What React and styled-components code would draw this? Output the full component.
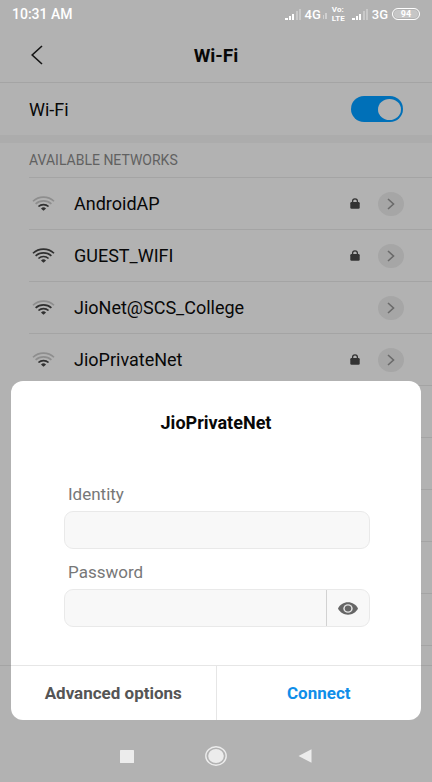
import React, { useState } from 'react';
import styled, { createGlobalStyle } from 'styled-components';

const NETWORKS = [
  { name: 'AndroidAP', level: 2, locked: true },
  { name: 'GUEST_WIFI', level: 4, locked: true },
  { name: 'JioNet@SCS_College', level: 3, locked: false },
  { name: 'JioPrivateNet', level: 2, locked: true },
];

const PENDING = [1, 2, 3, 4, 5];

function SignalBars() {
  return (
    <svg width="17" height="11" viewBox="0 0 17 11" fill="#fff" aria-hidden="true">
      <rect x="0" y="9" width="3" height="2" />
      <rect x="4" y="7" width="2" height="4" />
      <rect x="7" y="5" width="2" height="6" />
      <rect x="11" y="2" width="2" height="9" opacity="0.3" />
      <rect x="14" y="0" width="2" height="11" opacity="0.3" />
    </svg>
  );
}

function WifiIcon({ level }) {
  const tone = (n) => (level >= n ? '#303030' : '#8e8e8e');
  return (
    <svg width="23" height="15" viewBox="0 0 24 16" fill="none" strokeWidth="1.8" aria-hidden="true">
      <path d="M0.8 5.6C7 -0.2 17 -0.2 23.2 5.6" stroke={tone(4)} />
      <path d="M3.6 8.4C8.3 4.1 15.7 4.1 20.4 8.4" stroke={tone(3)} />
      <path d="M6.6 11.2C9.6 8.4 14.4 8.4 17.4 11.2" stroke={tone(2)} />
      <path d="M9.3 13.2Q12 11 14.7 13.2L12 15.6Z" fill={tone(1)} />
    </svg>
  );
}

function NetworkRow({ name, level, locked }) {
  return (
    <Row>
      <WifiIcon level={level} />
      <NetworkName>{name}</NetworkName>
      {locked && (
        <svg width="10" height="11" viewBox="0 0 10 11" aria-hidden="true">
          <path d="M2.6 5V3.2a2.4 2.4 0 0 1 4.8 0V5" fill="none" stroke="#333" strokeWidth="1.3" />
          <rect x="0.3" y="4" width="9.4" height="6.8" rx="1.2" fill="#333" />
        </svg>
      )}
      <DetailButton type="button" aria-label={`${name} details`}>
        <svg width="8" height="12" viewBox="0 0 8 12" fill="none" stroke="#6a6a6a" strokeWidth="1.6" aria-hidden="true">
          <path d="M1 1l5.5 5L1 11" />
        </svg>
      </DetailButton>
    </Row>
  );
}

function App() {
  const [enabled, setEnabled] = useState(true);
  const [visible, setVisible] = useState(false);

  return (
    <Page>
      <GlobalStyle />
      <StatusBar>
        <Clock>10:31 AM</Clock>
        <SignalBars />
        <StatusText>4G</StatusText>
        <SmallBars width="4" height="6" viewBox="0 0 4 6" aria-hidden="true">
          <rect x="0" y="2" width="1" height="4" />
          <rect x="2" y="0" width="2" height="6" />
        </SmallBars>
        <Volte>
          <span>Vo:</span>
          <span>LTE</span>
        </Volte>
        <SignalBars />
        <StatusText>3G</StatusText>
        <Battery>94</Battery>
      </StatusBar>

      <Header>
        <BackButton type="button" aria-label="Back">
          <svg width="12" height="20" viewBox="0 0 12 20" fill="none" stroke="#151515" strokeWidth="1.6" aria-hidden="true">
            <path d="M11 1L1.2 10L11 19" />
          </svg>
        </BackButton>
        <Title>Wi-Fi</Title>
      </Header>

      <SwitchRow>
        <span>Wi-Fi</span>
        <Switch
          type="checkbox"
          role="switch"
          aria-label="Wi-Fi"
          checked={enabled}
          onChange={(e) => setEnabled(e.target.checked)}
        />
      </SwitchRow>

      <Section>
        <SectionTitle>AVAILABLE NETWORKS</SectionTitle>
        {NETWORKS.map((network) => (
          <NetworkRow key={network.name} {...network} />
        ))}
        {PENDING.map((id) => (
          <Row key={id} />
        ))}
        <Row $last />
      </Section>

      <BottomBar />
      <NavBar>
        <NavButton type="button" aria-label="Recent apps">
          <svg width="14" height="13" viewBox="0 0 14 13" aria-hidden="true">
            <rect width="14" height="13" rx="0.5" fill="#ececec" />
          </svg>
        </NavButton>
        <NavButton type="button" aria-label="Home">
          <svg width="22" height="20" viewBox="0 0 22 20" aria-hidden="true">
            <ellipse cx="11" cy="10" rx="10.2" ry="9.2" fill="none" stroke="#ececec" strokeWidth="1.4" />
            <ellipse cx="11" cy="10" rx="7.8" ry="7" fill="#ececec" />
          </svg>
        </NavButton>
        <NavButton type="button" aria-label="Go back">
          <svg width="14" height="14" viewBox="0 0 14 14" aria-hidden="true">
            <path d="M0.5 7L13.5 0.3V13.7Z" fill="#ececec" />
          </svg>
        </NavButton>
      </NavBar>

      <Dialog role="dialog" aria-labelledby="dialog-title">
        <DialogTitle id="dialog-title">JioPrivateNet</DialogTitle>
        <Form>
          <Label htmlFor="identity">Identity</Label>
          <Field>
            <Input id="identity" type="text" />
          </Field>
          <Label htmlFor="password">Password</Label>
          <Field>
            <Input id="password" type={visible ? 'text' : 'password'} />
            <EyeButton type="button" aria-label="Show password" onClick={() => setVisible(!visible)}>
              <svg width="20" height="13" viewBox="0 0 20 13" aria-hidden="true">
                <path d="M0 6.5C2 2.6 5.6 0.3 10 0.3S18 2.6 20 6.5C18 10.4 14.4 12.7 10 12.7S2 10.4 0 6.5Z" fill="#666" />
                <ellipse cx="10" cy="6.5" rx="4.7" ry="4.3" fill="#e4e4e4" />
                <ellipse cx="10" cy="6.5" rx="3.2" ry="2.9" fill="#666" />
              </svg>
            </EyeButton>
          </Field>
        </Form>
        <Actions>
          <Action type="button">Advanced options</Action>
          <Action type="button" $primary>Connect</Action>
        </Actions>
      </Dialog>
    </Page>
  );
}

const GlobalStyle = createGlobalStyle`
  * {
    box-sizing: border-box;
  }

  body {
    margin: 0;
    background-color: #b2b2b2;
    font-family: Roboto, sans-serif;
    color: #080808;
  }

  button, input {
    font-family: inherit;
  }
`;

const Page = styled.div`
  position: relative;
  display: flex;
  flex-direction: column;
  min-height: 100vh;
`;

const StatusBar = styled.div`
  display: flex;
  align-items: center;
  height: 28px;
  padding: 0 12px;
  color: #fff;
`;

const Clock = styled.span`
  flex: 1;
  font-size: 14px;
  font-weight: 500;
`;

const StatusText = styled.span`
  margin-left: 3px;
  font-size: 13px;
  font-weight: 500;
`;

const SmallBars = styled.svg`
  margin: 4px 5px 0 2px;
  fill: #fff;
  opacity: 0.4;
`;

const Volte = styled.span`
  display: flex;
  flex-direction: column;
  margin-right: 7px;
  font-size: 8px;
  font-weight: 700;
  line-height: 9px;
`;

const Battery = styled.span`
  width: 28px;
  height: 12px;
  margin-left: 4px;
  border: 1px solid #fff;
  border-radius: 6px;
  box-shadow: inset 0 0 0 1px #b2b2b2;
  background-color: #c6c6c6;
  font-size: 9px;
  font-weight: 700;
  line-height: 10px;
  text-align: center;
`;

const Header = styled.header`
  display: grid;
  grid-template-columns: 50px 1fr 50px;
  align-items: center;
  height: 55px;
  padding: 0 12px;
  border-bottom: 1px solid #a4a4a4;
`;

const BackButton = styled.button`
  display: flex;
  justify-content: center;
  padding: 8px;
  border: 0;
  background: none;
`;

const Title = styled.h1`
  margin: 0;
  font-size: 19px;
  font-weight: 700;
  text-align: center;
`;

const SwitchRow = styled.label`
  display: flex;
  align-items: center;
  justify-content: space-between;
  height: 52px;
  padding: 0 29px;
  font-size: 18px;
`;

const Switch = styled.input`
  display: flex;
  align-items: center;
  justify-content: flex-end;
  appearance: none;
  width: 52px;
  height: 26px;
  margin: 0;
  padding: 2px;
  border-radius: 13px;
  background-color: #0070b8;

  &::before {
    content: '';
    width: 23px;
    height: 21px;
    border-radius: 50%;
    background-color: #b2b2b2;
  }

  &:not(:checked) {
    justify-content: flex-start;
    background-color: #909090;
  }
`;

const Section = styled.section`
  padding-left: 29px;
  border-top: 8px solid #acacac;
`;

const SectionTitle = styled.h2`
  height: 35px;
  margin: 0;
  border-bottom: 1px solid #a4a4a4;
  font-size: 14px;
  font-weight: 400;
  line-height: 35px;
  color: #616161;
`;

const Row = styled.div`
  display: flex;
  align-items: center;
  height: ${(props) => (props.$last ? '19px' : '52px')};
  padding: 0 28px 0 3px;
  border-bottom: ${(props) => (props.$last ? '0' : '1px solid #a4a4a4')};
`;

const NetworkName = styled.span`
  flex: 1;
  margin-left: 19px;
  font-size: 18px;
`;

const DetailButton = styled.button`
  display: flex;
  align-items: center;
  justify-content: center;
  width: 26px;
  height: 24px;
  margin-left: 18px;
  padding: 0;
  border: 0;
  border-radius: 50%;
  background-color: #a6a6a6;
`;

const BottomBar = styled.div`
  flex: 1;
  border-top: 1px solid #a4a4a4;
`;

const NavBar = styled.nav`
  display: flex;
  align-items: center;
  justify-content: center;
  gap: 30px;
  height: 52px;
`;

const NavButton = styled.button`
  display: flex;
  align-items: center;
  justify-content: center;
  width: 59px;
  height: 40px;
  padding: 0;
  border: 0;
  background: none;
`;

const Dialog = styled.div`
  position: absolute;
  right: 11px;
  bottom: 62px;
  left: 11px;
  border-radius: 12px;
  background-color: #fff;
  overflow: hidden;
`;

const DialogTitle = styled.h2`
  margin: 0;
  padding: 32px 0 51px;
  font-size: 18px;
  font-weight: 700;
  line-height: 20px;
  text-align: center;
`;

const Form = styled.form`
  padding: 0 51px 38px 53px;
`;

const Label = styled.label`
  display: block;
  padding: 0 4px;
  font-size: 17px;
  line-height: 20px;
  color: #777;
`;

const Field = styled.div`
  display: flex;
  height: 38px;
  margin: 7px 0 13px;
  border: 1px solid #e9e9e9;
  border-radius: 9px;
  background-color: #f8f8f8;
  overflow: hidden;

  &:last-child {
    margin-bottom: 0;
  }
`;

const Input = styled.input`
  flex: 1;
  min-width: 0;
  padding: 0 12px;
  border: 0;
  background: none;
  font-size: 17px;
  outline: none;
`;

const EyeButton = styled.button`
  display: flex;
  align-items: center;
  justify-content: center;
  width: 43px;
  padding: 0;
  border: 0;
  border-left: 1px solid #d2d2d2;
  background: none;
`;

const Actions = styled.div`
  display: flex;
  border-top: 1px solid #e6e6e6;
`;

const Action = styled.button`
  flex: 1;
  height: 54px;
  padding: 0;
  border: 0;
  background: none;
  font-size: 17px;
  font-weight: 700;
  color: ${(props) => (props.$primary ? '#0f8ee9' : '#555')};

  & + & {
    border-left: 1px solid #e6e6e6;
  }
`;

export default App;
